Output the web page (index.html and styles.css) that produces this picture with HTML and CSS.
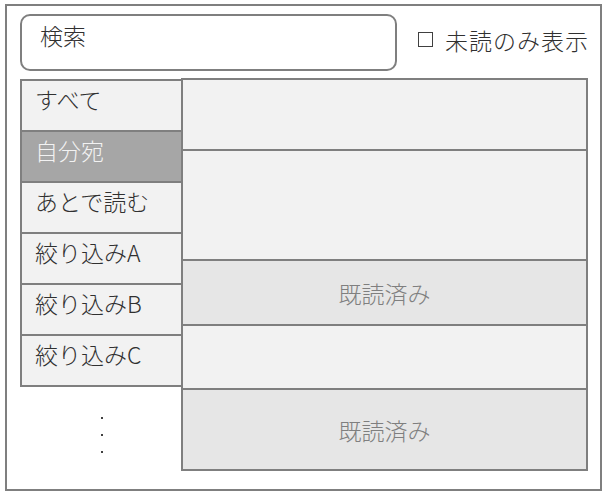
FILE: index.html
```html
<!DOCTYPE html>
<html lang="ja">
<head>
<meta charset="utf-8">
<link rel="stylesheet" href="styles.css">
</head>
<body>
<div class="frame">
  <div class="header">
    <div class="search">検索</div>
    <label class="unread"><span class="check"></span><span class="unread-text">未読のみ表示</span></label>
  </div>
  <div class="main">
    <div class="sidebar">
      <div class="item">すべて</div>
      <div class="item selected">自分宛</div>
      <div class="item">あとで読む</div>
      <div class="item">絞り込みA</div>
      <div class="item">絞り込みB</div>
      <div class="item">絞り込みC</div>
      <div class="dots"><span></span><span></span><span></span></div>
    </div>
    <div class="list">
      <div class="row r1"></div>
      <div class="row r2"></div>
      <div class="row r3 read">既読済み</div>
      <div class="row r4"></div>
      <div class="row r5 read">既読済み</div>
    </div>
  </div>
</div>
</body>
</html>
```

FILE: styles.css
```css
html, body {
  margin: 0;
  padding: 0;
  background: #ffffff;
}
body {
  font-family: "Noto Sans CJK JP", "Noto Sans", sans-serif;
  font-weight: 300;
  color: #303030;
  font-size: 23px;
}
.frame {
  box-sizing: border-box;
  margin: 4px 0 0 5px;
  width: 597px;
  height: 487px;
  border: 2px solid #7f7f7f;
  padding: 8px 12px 0 13px;
}
.header {
  display: flex;
  align-items: center;
}
.search {
  box-sizing: border-box;
  flex: none;
  width: 377px;
  height: 57px;
  border: 2px solid #7f7f7f;
  border-radius: 10px;
  padding: 4px 0 0 18px;
  line-height: 30px;
}
.unread {
  display: flex;
  align-items: center;
  flex: none;
  white-space: nowrap;
  margin-left: 21px;
  margin-top: -6px;
}
.check {
  box-sizing: border-box;
  width: 15px;
  height: 15px;
  border: 1px solid #404040;
}
.unread-text {
  margin-left: 12px;
  letter-spacing: 1px;
}
.main {
  display: flex;
  align-items: flex-start;
  margin-top: 7px;
}
.sidebar {
  flex: none;
  width: 163px;
  margin-top: 1px;
  display: flex;
  flex-direction: column;
}
.item {
  box-sizing: border-box;
  height: 53px;
  border: 2px solid #7f7f7f;
  background: #f2f2f2;
  padding: 3px 0 0 13px;
  line-height: 30px;
}
.item + .item {
  margin-top: -2px;
}
.item.selected {
  background: #a6a6a6;
  color: #f2f2f2;
}
.dots {
  display: flex;
  flex-direction: column;
  align-items: center;
  gap: 15px;
  margin-top: 30px;
}
.dots span {
  width: 2px;
  height: 2px;
  background: #404040;
}
.list {
  flex: 1;
  margin-left: -2px;
  display: flex;
  flex-direction: column;
}
.row {
  box-sizing: border-box;
  border: 2px solid #7f7f7f;
  background: #f2f2f2;
  display: flex;
  align-items: center;
  justify-content: center;
  color: #7f7f7f;
}
.row + .row {
  margin-top: -2px;
}
.row.read {
  background: #e6e6e6;
}
.r1 { height: 73px; }
.r2 { height: 112px; }
.r3 { height: 67px; }
.r4 { height: 66px; }
.r5 { height: 83px; }
```
